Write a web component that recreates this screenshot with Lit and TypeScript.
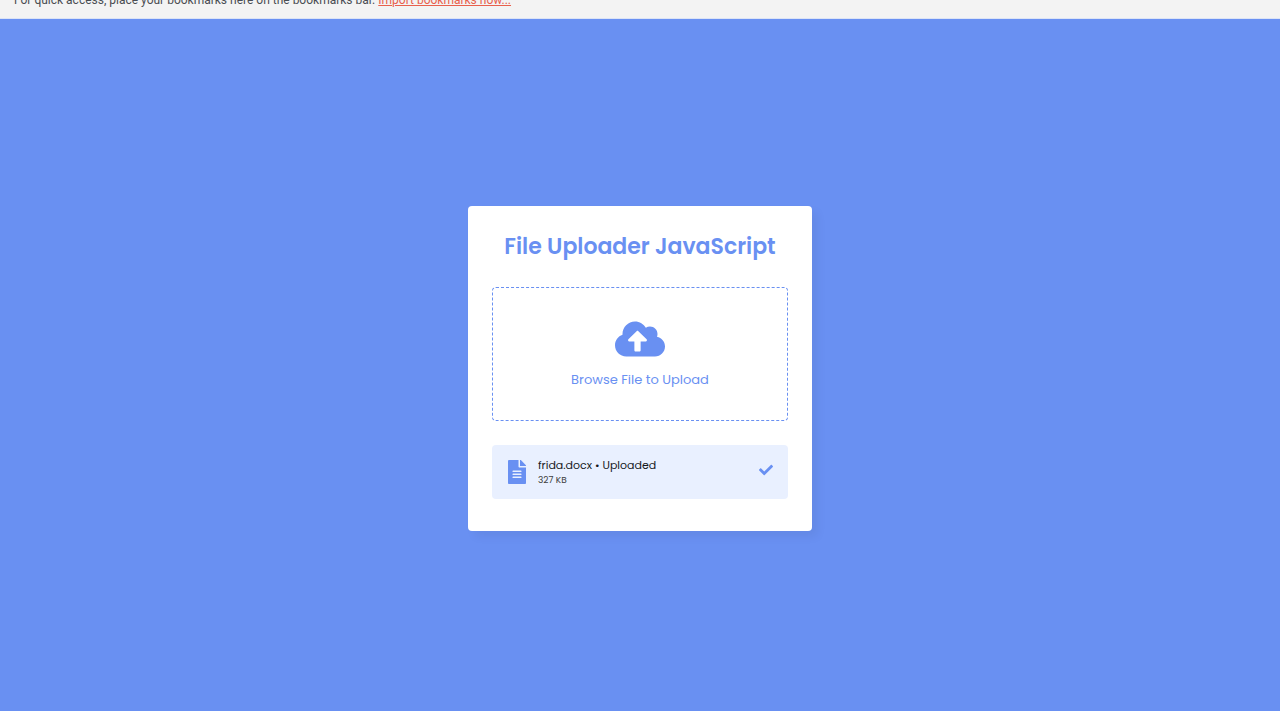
import { LitElement, html, css } from "lit";
import { customElement, state } from "lit/decorators.js";

interface UploadedFile {
  name: string;
  size: string;
}

@customElement("app-root")
export class AppRoot extends LitElement {
  static styles = css`
    :host {
      display: flex;
      flex-direction: column;
      min-height: 100vh;
      background: #6990f2;
      font-family: Poppins, Inter, sans-serif;
    }
    .bookmarks {
      display: flex;
      align-items: flex-end;
      box-sizing: border-box;
      height: 19px;
      padding: 0 14px 10px;
      overflow: hidden;
      background: #f3f3f3;
      border-bottom: 1px solid #dbe3f6;
      color: #4a4d52;
      font: 12px/16px "Segoe UI", Roboto, sans-serif;
      white-space: nowrap;
    }
    .bookmarks p {
      margin: 0;
    }
    .bookmarks a {
      color: #e8604c;
    }
    main {
      flex: 1;
      display: flex;
      align-items: center;
      justify-content: center;
      padding-top: 7px;
    }
    .card {
      box-sizing: border-box;
      width: 344px;
      max-width: 100%;
      padding: 24px 24px 32px;
      background: #fff;
      border-radius: 4px;
      box-shadow: 6px 6px 10px rgba(0, 0, 0, 0.05);
    }
    h1 {
      margin: 0;
      color: #6990f2;
      font-size: 22px;
      line-height: 33px;
      font-weight: 600;
      text-align: center;
      white-space: nowrap;
    }
    .drop {
      display: flex;
      flex-direction: column;
      align-items: center;
      justify-content: center;
      gap: 11px;
      box-sizing: border-box;
      height: 134px;
      margin: 24px 0;
      padding-top: 1px;
      border: 1px dashed #6990f2;
      border-radius: 4px;
      color: #6990f2;
      font-size: 13px;
      line-height: 20px;
      cursor: pointer;
    }
    .drop:focus-within {
      border-style: solid;
    }
    .picker {
      position: absolute;
      width: 1px;
      height: 1px;
      opacity: 0;
      overflow: hidden;
    }
    svg {
      display: block;
      fill: #6990f2;
    }
    .cloud {
      width: 50px;
      height: 40px;
    }
    .files {
      display: grid;
      gap: 8px;
      margin: 0;
      padding: 0;
      list-style: none;
    }
    .file {
      display: flex;
      align-items: center;
      gap: 12px;
      padding: 12px 15px 12px 16px;
      background: #e9f0ff;
      border-radius: 4px;
    }
    .doc {
      width: 18px;
      height: 24px;
    }
    .details {
      flex: 1;
      display: flex;
      flex-direction: column;
    }
    .name {
      color: #16181d;
      font-size: 11px;
      line-height: 16px;
    }
    .size {
      color: #404040;
      font-size: 9px;
      line-height: 14px;
    }
    .done {
      padding-bottom: 4px;
    }
    .check {
      width: 14px;
      height: 14px;
    }
  `;

  @state() private files: UploadedFile[] = [{ name: "frida.docx", size: "327 KB" }];

  private pick(event: Event) {
    const chosen = (event.target as HTMLInputElement).files?.[0];
    if (!chosen) return;
    const size = `${Math.round(chosen.size / 1024)} KB`;
    this.files = [{ name: chosen.name, size }, ...this.files];
  }

  render() {
    return html`
      <div class="bookmarks">
        <p>
          For quick access, place your bookmarks here on the bookmarks bar.
          <a href="#import">Import bookmarks now...</a>
        </p>
      </div>
      <main>
        <section class="card">
          <h1>File Uploader JavaScript</h1>
          <label class="drop">
            <input class="picker" type="file" @change=${this.pick} />
            <svg class="cloud" viewBox="0 0 640 512" aria-hidden="true">
              <path
                d="M537.6 226.6c4.1-10.7 6.4-22.4 6.4-34.6 0-53-43-96-96-96-19.7 0-38.1 6-53.3 16.2C367 64.2 315.3 32 256 32c-88.4 0-160 71.6-160 160 0 2.7.1 5.4.2 8.1C40.2 219.8 0 273.2 0 336c0 79.5 64.5 144 144 144h368c70.7 0 128-57.3 128-128 0-61.9-44-113.6-102.4-125.4zM393.4 288H328v112c0 8.8-7.2 16-16 16h-48c-8.8 0-16-7.2-16-16V288h-65.4c-14.3 0-21.4-17.2-11.3-27.3l105.4-105.4c6.2-6.2 16.4-6.2 22.6 0l105.4 105.4c10.1 10.1 2.9 27.3-11.3 27.3z"
              />
            </svg>
            <span>Browse File to Upload</span>
          </label>
          <ul class="files">
            ${this.files.map(
              (file) => html`
                <li class="file">
                  <svg class="doc" viewBox="0 0 384 512" aria-hidden="true">
                    <path
                      d="M224 136V0H24C10.7 0 0 10.7 0 24v464c0 13.3 10.7 24 24 24h336c13.3 0 24-10.7 24-24V160H248c-13.2 0-24-10.8-24-24zm64 236c0 6.6-5.4 12-12 12H108c-6.6 0-12-5.4-12-12v-8c0-6.6 5.4-12 12-12h168c6.6 0 12 5.4 12 12v8zm0-64c0 6.6-5.4 12-12 12H108c-6.6 0-12-5.4-12-12v-8c0-6.6 5.4-12 12-12h168c6.6 0 12 5.4 12 12v8zm0-72v8c0 6.6-5.4 12-12 12H108c-6.6 0-12-5.4-12-12v-8c0-6.6 5.4-12 12-12h168c6.6 0 12 5.4 12 12zm96-114.1v6.1H256V0h6.1c6.4 0 12.5 2.5 17 7l97.9 98c4.5 4.5 7 10.6 7 16.9z"
                    />
                  </svg>
                  <div class="details">
                    <span class="name">${file.name} • Uploaded</span>
                    <span class="size">${file.size}</span>
                  </div>
                  <div class="done">
                    <svg class="check" viewBox="0 0 512 512" aria-hidden="true">
                      <path
                        d="M173.898 439.404l-166.4-166.4c-9.997-9.997-9.997-26.206 0-36.204l36.203-36.204c9.997-9.998 26.207-9.998 36.204 0L192 312.69 432.095 72.596c9.997-9.997 26.207-9.997 36.204 0l36.203 36.204c9.997 9.997 9.997 26.206 0 36.204l-294.4 294.401c-9.998 9.997-26.207 9.997-36.204-.001z"
                      />
                    </svg>
                  </div>
                </li>
              `
            )}
          </ul>
        </section>
      </main>
    `;
  }
}
